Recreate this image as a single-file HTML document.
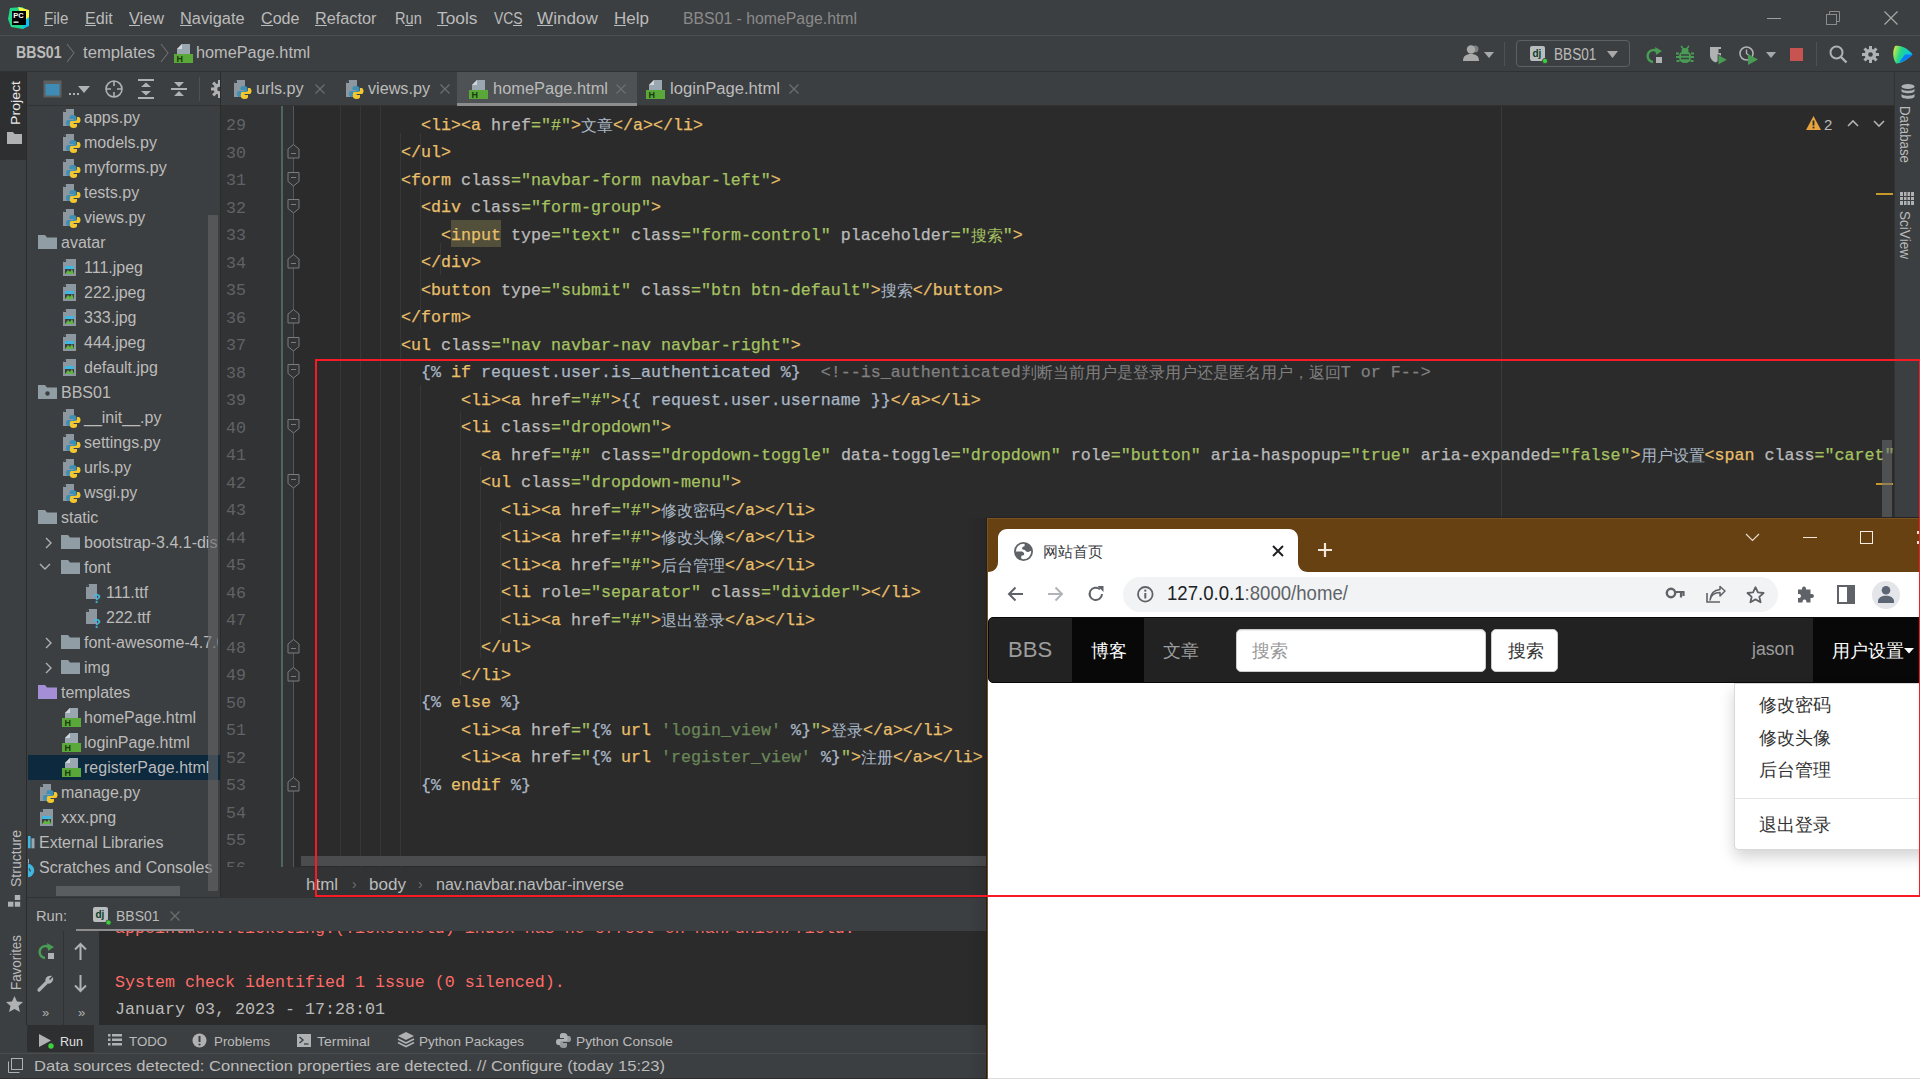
<!DOCTYPE html><html><head><meta charset="utf-8"><style>
*{margin:0;padding:0;box-sizing:border-box}
html,body{width:1920px;height:1079px;overflow:hidden;background:#3c3f41;font-family:"Liberation Sans",sans-serif;position:relative}
.a{position:absolute}
.tx{position:absolute;white-space:pre;line-height:1}
.mono{position:absolute;font-family:"Liberation Mono",monospace;font-size:16.67px;white-space:pre;line-height:27.5px;-webkit-text-stroke:0.25px currentColor}
.t{color:#e8bf6a}.n{color:#bababa}.v{color:#a5c261}.x{color:#a9b7c6}.c{color:#808080}.s{color:#6a8759}
.cj{font-size:16px;font-family:"Liberation Sans",sans-serif;-webkit-text-stroke:0}
.ln{position:absolute;color:#606366;font-family:"Liberation Mono",monospace;font-size:16.67px;text-align:right;width:40px;line-height:27.5px}
svg{position:absolute;overflow:visible}
u{text-decoration:none;border-bottom:1px solid currentColor;display:inline-block;line-height:1.1}
.hl{color:#e8bf6a}</style></head><body>
<div class="a" style="left:0px;top:0px;width:1920px;height:35px;background:#3c3f41"></div>
<div class="a" style="left:0px;top:35px;width:1920px;height:1px;background:#4d4e50"></div>
<div class="a" style="left:0px;top:36px;width:1920px;height:35px;background:#3c3f41"></div>
<div class="a" style="left:0px;top:71px;width:1920px;height:1px;background:#2f3133"></div>
<svg style="left:8px;top:7px;" width="22" height="22" viewBox="0 0 22 22"><polygon points="2,1 14,0 21,5 21,18 15,22 3,20 0,12" fill="#21d789"/><polygon points="10,0 21,3 21,14 14,10" fill="#fcf84a"/><polygon points="21,10 21,19 14,22 16,14" fill="#07c3f2"/><rect x="4" y="4" width="14" height="14" fill="#000"/><text x="5.2" y="11" font-size="7.5" font-weight="bold" fill="#fff" font-family="Liberation Sans">PC</text><rect x="5.5" y="14.5" width="5" height="1.3" fill="#fff"/></svg>
<div class="tx" style="left:44.3px;top:10.9px;font-size:16.00px;color:#bbbbbb;transform-origin:0 0;transform:scaleX(0.9464);">File</div>
<div class="a" style="left:44px;top:25px;width:9px;height:1px;background:#bbbbbb"></div>
<div class="tx" style="left:85.3px;top:10.9px;font-size:16.00px;color:#bbbbbb;transform-origin:0 0;transform:scaleX(1.0047);">Edit</div>
<div class="a" style="left:85px;top:25px;width:11px;height:1px;background:#bbbbbb"></div>
<div class="tx" style="left:128.9px;top:10.9px;font-size:16.00px;color:#bbbbbb;transform-origin:0 0;transform:scaleX(1.0206);">View</div>
<div class="a" style="left:129px;top:25px;width:11px;height:1px;background:#bbbbbb"></div>
<div class="tx" style="left:180.0px;top:10.9px;font-size:16.00px;color:#bbbbbb;transform-origin:0 0;transform:scaleX(1.0230);">Navigate</div>
<div class="a" style="left:180px;top:25px;width:12px;height:1px;background:#bbbbbb"></div>
<div class="tx" style="left:261.0px;top:10.9px;font-size:16.00px;color:#bbbbbb;transform-origin:0 0;transform:scaleX(1.0065);">Code</div>
<div class="a" style="left:261px;top:25px;width:12px;height:1px;background:#bbbbbb"></div>
<div class="tx" style="left:315.4px;top:10.9px;font-size:16.00px;color:#bbbbbb;transform-origin:0 0;transform:scaleX(1.0170);">Refactor</div>
<div class="a" style="left:315px;top:25px;width:12px;height:1px;background:#bbbbbb"></div>
<div class="tx" style="left:394.7px;top:10.9px;font-size:16.00px;color:#bbbbbb;transform-origin:0 0;transform:scaleX(0.9130);">Run</div>
<div class="a" style="left:405px;top:25px;width:8px;height:1px;background:#bbbbbb"></div>
<div class="tx" style="left:437.3px;top:10.9px;font-size:16.00px;color:#bbbbbb;transform-origin:0 0;transform:scaleX(1.0842);">Tools</div>
<div class="a" style="left:437px;top:25px;width:11px;height:1px;background:#bbbbbb"></div>
<div class="tx" style="left:494.0px;top:10.9px;font-size:16.00px;color:#bbbbbb;transform-origin:0 0;transform:scaleX(0.8693);">VCS</div>
<div class="a" style="left:513px;top:25px;width:9px;height:1px;background:#bbbbbb"></div>
<div class="tx" style="left:537.2px;top:10.9px;font-size:16.00px;color:#bbbbbb;transform-origin:0 0;transform:scaleX(1.0684);">Window</div>
<div class="a" style="left:537px;top:25px;width:16px;height:1px;background:#bbbbbb"></div>
<div class="tx" style="left:614.0px;top:10.9px;font-size:16.00px;color:#bbbbbb;transform-origin:0 0;transform:scaleX(1.0575);">Help</div>
<div class="a" style="left:614px;top:25px;width:12px;height:1px;background:#bbbbbb"></div>
<div class="tx" style="left:683.0px;top:10.9px;font-size:16.00px;color:#8b8b8b;transform-origin:0 0;transform:scaleX(0.9881);">BBS01 - homePage.html</div>
<div class="a" style="left:1767px;top:18px;width:14px;height:1px;background:#a0a0a0"></div>
<svg style="left:1826px;top:11px;" width="14" height="14" viewBox="0 0 14 14"><rect x="0.5" y="3.5" width="10" height="10" fill="none" stroke="#8c8c8c"/><path d="M3.5 3.5V0.5h10v10h-3" fill="none" stroke="#8c8c8c"/></svg>
<svg style="left:1884px;top:11px;" width="14" height="14" viewBox="0 0 14 14"><path d="M0.5 0.5L13.5 13.5M13.5 0.5L0.5 13.5" stroke="#a8a8a8" stroke-width="1.2"/></svg>
<div class="tx" style="left:15.5px;top:45.4px;font-size:16.00px;color:#bbbbbb;font-weight:bold;transform-origin:0 0;transform:scaleX(0.8821);">BBS01</div>
<svg style="left:66px;top:43px;" width="10" height="20" viewBox="0 0 10 20"><path d="M1 1L8 10L1 19" fill="none" stroke="#6e6e6e" stroke-width="1.1"/></svg>
<div class="tx" style="left:83.3px;top:45.4px;font-size:16.00px;color:#bbbbbb;transform-origin:0 0;transform:scaleX(1.0408);">templates</div>
<svg style="left:160px;top:43px;" width="10" height="20" viewBox="0 0 10 20"><path d="M1 1L8 10L1 19" fill="none" stroke="#6e6e6e" stroke-width="1.1"/></svg>
<svg style="left:174px;top:44px;" width="19" height="19" viewBox="0 0 19 19"><path d="M8 0H16V10H3V5Z" fill="#9aa7b0"/><path d="M3 5L8 0V5Z" fill="#d0d6da"/><rect x="0" y="10" width="19" height="9" fill="#59a839"/><text x="2.5" y="18" font-size="9" font-weight="bold" font-family="Liberation Sans" fill="#1b3a0e">H</text></svg>
<div class="tx" style="left:196.4px;top:45.4px;font-size:16.00px;color:#bbbbbb;transform-origin:0 0;transform:scaleX(1.0182);">homePage.html</div>
<svg style="left:1462px;top:45px;" width="20" height="17" viewBox="0 0 20 17"><circle cx="9" cy="4.5" r="4.2" fill="#a9a9a9"/><path d="M1 16c0-5 3-7 8-7s8 2 8 7z" fill="#a9a9a9"/><circle cx="13" cy="4" r="3.5" fill="#a9a9a9" opacity=".6"/></svg>
<svg style="left:1484px;top:52px;" width="10" height="6" viewBox="0 0 10 6"><path d="M0 0H10L5 6Z" fill="#a9a9a9"/></svg>
<div class="a" style="left:1504px;top:42px;width:1px;height:24px;background:#515151"></div>
<div class="a" style="left:1516px;top:40px;width:114px;height:27px;border:1px solid #5e6161;border-radius:4px"></div>
<svg style="left:1530px;top:46px;" width="17" height="17" viewBox="0 0 17 17"><rect x="0" y="0" width="15" height="15" rx="2" fill="#b9bdbf"/><text x="2.5" y="11" font-size="10" font-weight="bold" font-family="Liberation Sans" fill="#0c3c26">dj</text><circle cx="15" cy="15" r="2.6" fill="#3bd13b" stroke="#3c3f41" stroke-width="0.8"/></svg>
<div class="tx" style="left:1553.7px;top:46.5px;font-size:16.00px;color:#bbbbbb;transform-origin:0 0;transform:scaleX(0.8492);">BBS01</div>
<svg style="left:1607px;top:51px;" width="11" height="7" viewBox="0 0 11 7"><path d="M0 0H11L5.5 7Z" fill="#a9a9a9"/></svg>
<svg style="left:1645px;top:46px;" width="18" height="18" viewBox="0 0 18 18"><path d="M13 6A6 6 0 1 0 8 16" fill="none" stroke="#499c54" stroke-width="2.4"/><path d="M10 1L17 5L11 9Z" fill="#499c54"/><rect x="11" y="11" width="6" height="6" fill="#afb1b3"/></svg>
<svg style="left:1676px;top:45px;" width="18" height="19" viewBox="0 0 18 19"><path d="M5 1L7.5 4M13 1L10.5 4" stroke="#499c54" stroke-width="1.6"/><ellipse cx="9" cy="5.5" rx="3.5" ry="2.5" fill="#499c54"/><rect x="3" y="6" width="12" height="12" rx="5.5" fill="#499c54"/><path d="M0 8.5H3M15 8.5H18M0 12H3M15 12H18M0.5 16H3.5M14.5 16H17.5" stroke="#499c54" stroke-width="1.8"/><path d="M5 10H13M5 13.5H13" stroke="#3c3f41" stroke-width="1.5"/></svg>
<svg style="left:1709px;top:46px;" width="19" height="19" viewBox="0 0 19 19"><path d="M1 1H12V9C12 13 9 15.5 6.5 16.5C4 15.5 1 13 1 9Z" fill="#afb1b3"/><path d="M9.5 3H12V7H9.5Z" fill="#3c3f41"/><path d="M9 8.5L18.5 13.8L9 19Z" fill="#499c54" stroke="#3c3f41" stroke-width="0.8"/></svg>
<svg style="left:1739px;top:46px;" width="19" height="19" viewBox="0 0 19 19"><circle cx="7.5" cy="7.5" r="6.5" fill="none" stroke="#afb1b3" stroke-width="1.6"/><path d="M7.5 3.5V7.5L10 9.5" stroke="#afb1b3" stroke-width="1.4" fill="none"/><path d="M9 8L19 13.5L9 19Z" fill="#499c54"/></svg>
<svg style="left:1766px;top:52px;" width="10" height="6" viewBox="0 0 10 6"><path d="M0 0H10L5 6Z" fill="#a9a9a9"/></svg>
<div class="a" style="left:1790px;top:48px;width:13px;height:13px;background:#c75450"></div>
<div class="a" style="left:1816px;top:42px;width:1px;height:24px;background:#515151"></div>
<svg style="left:1829px;top:45px;" width="19" height="19" viewBox="0 0 19 19"><circle cx="7.5" cy="7.5" r="6" fill="none" stroke="#afb1b3" stroke-width="2"/><path d="M12 12L17.5 17.5" stroke="#afb1b3" stroke-width="2.4"/></svg>
<svg style="left:1862px;top:46px;" width="17" height="17" viewBox="0 0 17 17"><circle cx="8.5" cy="8.5" r="5.8" fill="#afb1b3"/><rect x="7" y="0" width="3" height="4" fill="#afb1b3" transform="rotate(0 8.5 8.5)"/><rect x="7" y="0" width="3" height="4" fill="#afb1b3" transform="rotate(45 8.5 8.5)"/><rect x="7" y="0" width="3" height="4" fill="#afb1b3" transform="rotate(90 8.5 8.5)"/><rect x="7" y="0" width="3" height="4" fill="#afb1b3" transform="rotate(135 8.5 8.5)"/><rect x="7" y="0" width="3" height="4" fill="#afb1b3" transform="rotate(180 8.5 8.5)"/><rect x="7" y="0" width="3" height="4" fill="#afb1b3" transform="rotate(225 8.5 8.5)"/><rect x="7" y="0" width="3" height="4" fill="#afb1b3" transform="rotate(270 8.5 8.5)"/><rect x="7" y="0" width="3" height="4" fill="#afb1b3" transform="rotate(315 8.5 8.5)"/><circle cx="8.5" cy="8.5" r="2.3" fill="#3c3f41"/></svg>
<svg style="left:1893px;top:45px;" width="20" height="19" viewBox="0 0 20 19"><defs><linearGradient id="lg1" x1="0" y1="0" x2="1" y2="0.3"><stop offset="0" stop-color="#f3eb3c"/><stop offset=".45" stop-color="#21d789"/><stop offset="1" stop-color="#07c3f2"/></linearGradient></defs><path d="M2 1C9 0 15 4 19.5 9.5C15 14 9 18.5 3 18.5C-0.5 13 -0.5 6 2 1Z" fill="url(#lg1)"/><path d="M19.5 9.5L12 9.5L6 17.5C11 16.5 16 13 19.5 9.5Z" fill="#087cfa"/></svg>
<div class="a" style="left:0px;top:72px;width:27px;height:980px;background:#3c3f41"></div>
<div class="a" style="left:0px;top:72px;width:27px;height:88px;background:#2d2f30"></div>
<div class="a" style="left:26px;top:72px;width:1px;height:980px;background:#2b2b2b"></div>
<div class="tx" style="left:0.0px;top:-11.4px;font-size:13.50px;color:#e8e8e8;transform-origin:0 0;transform:translate(9px,125px) rotate(-90deg) scaleX(1.0472) translate(0,-0px);left:0;top:0">Project</div>
<svg style="left:7px;top:132px;" width="15" height="12" viewBox="0 0 15 12"><path d="M0 0H6L7.5 2H15V12H0Z" fill="#afb1b3"/></svg>
<div class="tx" style="left:0.0px;top:-11.9px;font-size:14.00px;color:#bbbbbb;transform-origin:0 0;transform:translate(9px,887px) rotate(-90deg) scaleX(1.0035);left:0;top:0">Structure</div>
<svg style="left:8px;top:895px;" width="13" height="12" viewBox="0 0 13 12"><rect x="0" y="6.7" width="5.4" height="5" fill="#afb1b3"/><rect x="6.8" y="6.7" width="5.4" height="5" fill="#afb1b3"/><rect x="6.8" y="0" width="5.4" height="5" fill="#afb1b3"/></svg>
<div class="tx" style="left:0.0px;top:-11.9px;font-size:14.00px;color:#bbbbbb;transform-origin:0 0;transform:translate(9px,990px) rotate(-90deg) scaleX(0.9553);left:0;top:0">Favorites</div>
<svg style="left:6px;top:996px;" width="17" height="16" viewBox="0 0 17 16"><path d="M8.5 0L11 5.5L17 6L12.5 10L14 16L8.5 13L3 16L4.5 10L0 6L6 5.5Z" fill="#afb1b3"/></svg>
<div class="a" style="left:28px;top:72px;width:192px;height:825px;background:#3c3f41"></div>
<div class="a" style="left:28px;top:105px;width:192px;height:1px;background:#323232"></div>
<div class="a" style="left:220px;top:72px;width:1px;height:825px;background:#2b2b2b"></div>
<svg style="left:43px;top:80px;" width="20" height="19" viewBox="0 0 20 19"><rect x="0.5" y="0.5" width="18" height="17" fill="#5e6060" /><rect x="2.5" y="4" width="14" height="11.5" fill="#3e8bb5"/></svg>
<div class="a" style="left:69px;top:93px;width:2px;height:2px;background:#afb1b3"></div>
<div class="a" style="left:73px;top:93px;width:2px;height:2px;background:#afb1b3"></div>
<div class="a" style="left:77px;top:93px;width:2px;height:2px;background:#afb1b3"></div>
<svg style="left:78px;top:86px;" width="12" height="8" viewBox="0 0 12 8"><path d="M0 0H12L6 7Z" fill="#afb1b3"/></svg>
<svg style="left:105px;top:80px;" width="18" height="18" viewBox="0 0 18 18"><circle cx="9" cy="9" r="8" fill="none" stroke="#afb1b3" stroke-width="1.6"/><path d="M9 1V6M9 12V17M1 9H6M12 9H17" stroke="#afb1b3" stroke-width="1.6"/></svg>
<svg style="left:138px;top:79px;" width="16" height="20" viewBox="0 0 16 20"><path d="M0 1H16M0 19H16" stroke="#afb1b3" stroke-width="2"/><path d="M8 3.5L13 8H3Z M8 16.5L13 12H3Z" fill="#afb1b3"/></svg>
<svg style="left:171px;top:80px;" width="16" height="18" viewBox="0 0 16 18"><path d="M0 9H16" stroke="#afb1b3" stroke-width="2"/><path d="M8 7L13 2H3Z M8 11L13 16H3Z" fill="#afb1b3"/></svg>
<div class="a" style="left:199px;top:77px;width:1px;height:24px;background:#515151"></div>
<svg style="left:211px;top:80px;overflow:hidden" width="9" height="18" viewBox="0 0 9 18"><circle cx="8.5" cy="9" r="5.8" fill="#afb1b3"/><rect x="7" y="0" width="3" height="4" fill="#afb1b3" transform="rotate(0 8.5 9)"/><rect x="7" y="0" width="3" height="4" fill="#afb1b3" transform="rotate(45 8.5 9)"/><rect x="7" y="0" width="3" height="4" fill="#afb1b3" transform="rotate(90 8.5 9)"/><rect x="7" y="0" width="3" height="4" fill="#afb1b3" transform="rotate(135 8.5 9)"/><rect x="7" y="0" width="3" height="4" fill="#afb1b3" transform="rotate(180 8.5 9)"/><rect x="7" y="0" width="3" height="4" fill="#afb1b3" transform="rotate(225 8.5 9)"/><rect x="7" y="0" width="3" height="4" fill="#afb1b3" transform="rotate(270 8.5 9)"/><rect x="7" y="0" width="3" height="4" fill="#afb1b3" transform="rotate(315 8.5 9)"/><circle cx="8.5" cy="9" r="2.3" fill="#3c3f41"/></svg>
<div class="a" style="left:28px;top:755px;width:192px;height:25px;background:#0d293e"></div>
<div class="a" style="left:28px;top:105px;width:190px;height:781px;overflow:hidden">
<svg style="left:35px;top:4px;" width="18" height="19" viewBox="0 0 18 19"><path d="M3 0H11V17H0V3Z" fill="#9aa7b0" opacity=".85"/><path d="M3 0V3H0Z" fill="#3c3f41"/><path d="M10 6C7 6 6.5 7 6.5 8.5V10H10.5V11H5C3.5 11 3 12.5 3 14C3 15.5 3.7 17 5 17H6.5V15C6.5 13.8 7.3 13 8.5 13H12C13 13 13.5 12.5 13.5 11.5V8.5C13.5 7 12.5 6 10 6Z" fill="#3d8fb5"/><path d="M10.5 19C13.5 19 14 18 14 16.5V15H10V14H15.5C17 14 17.5 12.5 17.5 11C17.5 9.5 16.8 8 15.5 8H14V10C14 11.2 13.2 12 12 12H8.5C7.5 12 7 12.5 7 13.5V16.5C7 18 8 19 10.5 19Z" fill="#f4c82d"/></svg>
<div class="tx" style="left:56.0px;top:4.5px;font-size:16.00px;color:#bbbbbb;">apps.py</div>
<svg style="left:35px;top:29px;" width="18" height="19" viewBox="0 0 18 19"><path d="M3 0H11V17H0V3Z" fill="#9aa7b0" opacity=".85"/><path d="M3 0V3H0Z" fill="#3c3f41"/><path d="M10 6C7 6 6.5 7 6.5 8.5V10H10.5V11H5C3.5 11 3 12.5 3 14C3 15.5 3.7 17 5 17H6.5V15C6.5 13.8 7.3 13 8.5 13H12C13 13 13.5 12.5 13.5 11.5V8.5C13.5 7 12.5 6 10 6Z" fill="#3d8fb5"/><path d="M10.5 19C13.5 19 14 18 14 16.5V15H10V14H15.5C17 14 17.5 12.5 17.5 11C17.5 9.5 16.8 8 15.5 8H14V10C14 11.2 13.2 12 12 12H8.5C7.5 12 7 12.5 7 13.5V16.5C7 18 8 19 10.5 19Z" fill="#f4c82d"/></svg>
<div class="tx" style="left:56.0px;top:29.5px;font-size:16.00px;color:#bbbbbb;">models.py</div>
<svg style="left:35px;top:54px;" width="18" height="19" viewBox="0 0 18 19"><path d="M3 0H11V17H0V3Z" fill="#9aa7b0" opacity=".85"/><path d="M3 0V3H0Z" fill="#3c3f41"/><path d="M10 6C7 6 6.5 7 6.5 8.5V10H10.5V11H5C3.5 11 3 12.5 3 14C3 15.5 3.7 17 5 17H6.5V15C6.5 13.8 7.3 13 8.5 13H12C13 13 13.5 12.5 13.5 11.5V8.5C13.5 7 12.5 6 10 6Z" fill="#3d8fb5"/><path d="M10.5 19C13.5 19 14 18 14 16.5V15H10V14H15.5C17 14 17.5 12.5 17.5 11C17.5 9.5 16.8 8 15.5 8H14V10C14 11.2 13.2 12 12 12H8.5C7.5 12 7 12.5 7 13.5V16.5C7 18 8 19 10.5 19Z" fill="#f4c82d"/></svg>
<div class="tx" style="left:56.0px;top:54.5px;font-size:16.00px;color:#bbbbbb;">myforms.py</div>
<svg style="left:35px;top:79px;" width="18" height="19" viewBox="0 0 18 19"><path d="M3 0H11V17H0V3Z" fill="#9aa7b0" opacity=".85"/><path d="M3 0V3H0Z" fill="#3c3f41"/><path d="M10 6C7 6 6.5 7 6.5 8.5V10H10.5V11H5C3.5 11 3 12.5 3 14C3 15.5 3.7 17 5 17H6.5V15C6.5 13.8 7.3 13 8.5 13H12C13 13 13.5 12.5 13.5 11.5V8.5C13.5 7 12.5 6 10 6Z" fill="#3d8fb5"/><path d="M10.5 19C13.5 19 14 18 14 16.5V15H10V14H15.5C17 14 17.5 12.5 17.5 11C17.5 9.5 16.8 8 15.5 8H14V10C14 11.2 13.2 12 12 12H8.5C7.5 12 7 12.5 7 13.5V16.5C7 18 8 19 10.5 19Z" fill="#f4c82d"/></svg>
<div class="tx" style="left:56.0px;top:79.5px;font-size:16.00px;color:#bbbbbb;">tests.py</div>
<svg style="left:35px;top:104px;" width="18" height="19" viewBox="0 0 18 19"><path d="M3 0H11V17H0V3Z" fill="#9aa7b0" opacity=".85"/><path d="M3 0V3H0Z" fill="#3c3f41"/><path d="M10 6C7 6 6.5 7 6.5 8.5V10H10.5V11H5C3.5 11 3 12.5 3 14C3 15.5 3.7 17 5 17H6.5V15C6.5 13.8 7.3 13 8.5 13H12C13 13 13.5 12.5 13.5 11.5V8.5C13.5 7 12.5 6 10 6Z" fill="#3d8fb5"/><path d="M10.5 19C13.5 19 14 18 14 16.5V15H10V14H15.5C17 14 17.5 12.5 17.5 11C17.5 9.5 16.8 8 15.5 8H14V10C14 11.2 13.2 12 12 12H8.5C7.5 12 7 12.5 7 13.5V16.5C7 18 8 19 10.5 19Z" fill="#f4c82d"/></svg>
<div class="tx" style="left:56.0px;top:104.5px;font-size:16.00px;color:#bbbbbb;">views.py</div>
<svg style="left:10px;top:130px;" width="19" height="14" viewBox="0 0 19 14"><path d="M0 0H7L9 2.5H19V14H0Z" fill="#9aa7b0" opacity=".9"/></svg>
<div class="tx" style="left:33.0px;top:129.5px;font-size:16.00px;color:#bbbbbb;">avatar</div>
<svg style="left:35px;top:154px;" width="18" height="19" viewBox="0 0 18 19"><path d="M3 0H13V17H0V3Z" fill="#9aa7b0" opacity=".85"/><path d="M3 0V3H0Z" fill="#3c3f41"/><rect x="2" y="7" width="9" height="8" fill="#3c3f41"/><path d="M2 15L5 11L7 13L9 10L11 15Z" fill="#62b543"/><rect x="2" y="7" width="9" height="3" fill="#40b6e0"/></svg>
<div class="tx" style="left:56.0px;top:154.5px;font-size:16.00px;color:#bbbbbb;">111.jpeg</div>
<svg style="left:35px;top:179px;" width="18" height="19" viewBox="0 0 18 19"><path d="M3 0H13V17H0V3Z" fill="#9aa7b0" opacity=".85"/><path d="M3 0V3H0Z" fill="#3c3f41"/><rect x="2" y="7" width="9" height="8" fill="#3c3f41"/><path d="M2 15L5 11L7 13L9 10L11 15Z" fill="#62b543"/><rect x="2" y="7" width="9" height="3" fill="#40b6e0"/></svg>
<div class="tx" style="left:56.0px;top:179.5px;font-size:16.00px;color:#bbbbbb;">222.jpeg</div>
<svg style="left:35px;top:204px;" width="18" height="19" viewBox="0 0 18 19"><path d="M3 0H13V17H0V3Z" fill="#9aa7b0" opacity=".85"/><path d="M3 0V3H0Z" fill="#3c3f41"/><rect x="2" y="7" width="9" height="8" fill="#3c3f41"/><path d="M2 15L5 11L7 13L9 10L11 15Z" fill="#62b543"/><rect x="2" y="7" width="9" height="3" fill="#40b6e0"/></svg>
<div class="tx" style="left:56.0px;top:204.5px;font-size:16.00px;color:#bbbbbb;">333.jpg</div>
<svg style="left:35px;top:229px;" width="18" height="19" viewBox="0 0 18 19"><path d="M3 0H13V17H0V3Z" fill="#9aa7b0" opacity=".85"/><path d="M3 0V3H0Z" fill="#3c3f41"/><rect x="2" y="7" width="9" height="8" fill="#3c3f41"/><path d="M2 15L5 11L7 13L9 10L11 15Z" fill="#62b543"/><rect x="2" y="7" width="9" height="3" fill="#40b6e0"/></svg>
<div class="tx" style="left:56.0px;top:229.5px;font-size:16.00px;color:#bbbbbb;">444.jpeg</div>
<svg style="left:35px;top:254px;" width="18" height="19" viewBox="0 0 18 19"><path d="M3 0H13V17H0V3Z" fill="#9aa7b0" opacity=".85"/><path d="M3 0V3H0Z" fill="#3c3f41"/><rect x="2" y="7" width="9" height="8" fill="#3c3f41"/><path d="M2 15L5 11L7 13L9 10L11 15Z" fill="#62b543"/><rect x="2" y="7" width="9" height="3" fill="#40b6e0"/></svg>
<div class="tx" style="left:56.0px;top:254.5px;font-size:16.00px;color:#bbbbbb;">default.jpg</div>
<svg style="left:10px;top:280px;" width="19" height="14" viewBox="0 0 19 14"><path d="M0 0H7L9 2.5H19V14H0Z" fill="#9aa7b0" opacity=".9"/><circle cx="9.5" cy="8.5" r="2.2" fill="#3c3f41"/></svg>
<div class="tx" style="left:33.0px;top:279.5px;font-size:16.00px;color:#bbbbbb;">BBS01</div>
<svg style="left:35px;top:304px;" width="18" height="19" viewBox="0 0 18 19"><path d="M3 0H11V17H0V3Z" fill="#9aa7b0" opacity=".85"/><path d="M3 0V3H0Z" fill="#3c3f41"/><path d="M10 6C7 6 6.5 7 6.5 8.5V10H10.5V11H5C3.5 11 3 12.5 3 14C3 15.5 3.7 17 5 17H6.5V15C6.5 13.8 7.3 13 8.5 13H12C13 13 13.5 12.5 13.5 11.5V8.5C13.5 7 12.5 6 10 6Z" fill="#3d8fb5"/><path d="M10.5 19C13.5 19 14 18 14 16.5V15H10V14H15.5C17 14 17.5 12.5 17.5 11C17.5 9.5 16.8 8 15.5 8H14V10C14 11.2 13.2 12 12 12H8.5C7.5 12 7 12.5 7 13.5V16.5C7 18 8 19 10.5 19Z" fill="#f4c82d"/></svg>
<div class="tx" style="left:56.0px;top:304.5px;font-size:16.00px;color:#bbbbbb;">__init__.py</div>
<svg style="left:35px;top:329px;" width="18" height="19" viewBox="0 0 18 19"><path d="M3 0H11V17H0V3Z" fill="#9aa7b0" opacity=".85"/><path d="M3 0V3H0Z" fill="#3c3f41"/><path d="M10 6C7 6 6.5 7 6.5 8.5V10H10.5V11H5C3.5 11 3 12.5 3 14C3 15.5 3.7 17 5 17H6.5V15C6.5 13.8 7.3 13 8.5 13H12C13 13 13.5 12.5 13.5 11.5V8.5C13.5 7 12.5 6 10 6Z" fill="#3d8fb5"/><path d="M10.5 19C13.5 19 14 18 14 16.5V15H10V14H15.5C17 14 17.5 12.5 17.5 11C17.5 9.5 16.8 8 15.5 8H14V10C14 11.2 13.2 12 12 12H8.5C7.5 12 7 12.5 7 13.5V16.5C7 18 8 19 10.5 19Z" fill="#f4c82d"/></svg>
<div class="tx" style="left:56.0px;top:329.5px;font-size:16.00px;color:#bbbbbb;">settings.py</div>
<svg style="left:35px;top:354px;" width="18" height="19" viewBox="0 0 18 19"><path d="M3 0H11V17H0V3Z" fill="#9aa7b0" opacity=".85"/><path d="M3 0V3H0Z" fill="#3c3f41"/><path d="M10 6C7 6 6.5 7 6.5 8.5V10H10.5V11H5C3.5 11 3 12.5 3 14C3 15.5 3.7 17 5 17H6.5V15C6.5 13.8 7.3 13 8.5 13H12C13 13 13.5 12.5 13.5 11.5V8.5C13.5 7 12.5 6 10 6Z" fill="#3d8fb5"/><path d="M10.5 19C13.5 19 14 18 14 16.5V15H10V14H15.5C17 14 17.5 12.5 17.5 11C17.5 9.5 16.8 8 15.5 8H14V10C14 11.2 13.2 12 12 12H8.5C7.5 12 7 12.5 7 13.5V16.5C7 18 8 19 10.5 19Z" fill="#f4c82d"/></svg>
<div class="tx" style="left:56.0px;top:354.5px;font-size:16.00px;color:#bbbbbb;">urls.py</div>
<svg style="left:35px;top:379px;" width="18" height="19" viewBox="0 0 18 19"><path d="M3 0H11V17H0V3Z" fill="#9aa7b0" opacity=".85"/><path d="M3 0V3H0Z" fill="#3c3f41"/><path d="M10 6C7 6 6.5 7 6.5 8.5V10H10.5V11H5C3.5 11 3 12.5 3 14C3 15.5 3.7 17 5 17H6.5V15C6.5 13.8 7.3 13 8.5 13H12C13 13 13.5 12.5 13.5 11.5V8.5C13.5 7 12.5 6 10 6Z" fill="#3d8fb5"/><path d="M10.5 19C13.5 19 14 18 14 16.5V15H10V14H15.5C17 14 17.5 12.5 17.5 11C17.5 9.5 16.8 8 15.5 8H14V10C14 11.2 13.2 12 12 12H8.5C7.5 12 7 12.5 7 13.5V16.5C7 18 8 19 10.5 19Z" fill="#f4c82d"/></svg>
<div class="tx" style="left:56.0px;top:379.5px;font-size:16.00px;color:#bbbbbb;">wsgi.py</div>
<svg style="left:10px;top:405px;" width="19" height="14" viewBox="0 0 19 14"><path d="M0 0H7L9 2.5H19V14H0Z" fill="#9aa7b0" opacity=".9"/></svg>
<div class="tx" style="left:33.0px;top:404.5px;font-size:16.00px;color:#bbbbbb;">static</div>
<svg style="left:33px;top:430px;" width="19" height="14" viewBox="0 0 19 14"><path d="M0 0H7L9 2.5H19V14H0Z" fill="#9aa7b0" opacity=".9"/></svg>
<svg style="left:16px;top:432px;" width="12" height="12" viewBox="0 0 12 12"><path d="M2 1L7 6L2 11" fill="none" stroke="#afb1b3" stroke-width="1.4"/></svg>
<div class="tx" style="left:56.0px;top:429.5px;font-size:16.00px;color:#bbbbbb;">bootstrap-3.4.1-dist</div>
<svg style="left:33px;top:455px;" width="19" height="14" viewBox="0 0 19 14"><path d="M0 0H7L9 2.5H19V14H0Z" fill="#9aa7b0" opacity=".9"/></svg>
<svg style="left:11px;top:457px;" width="12" height="12" viewBox="0 0 12 12"><path d="M1 2L6 7L11 2" fill="none" stroke="#afb1b3" stroke-width="1.4"/></svg>
<div class="tx" style="left:56.0px;top:454.5px;font-size:16.00px;color:#bbbbbb;">font</div>
<svg style="left:58px;top:479px;" width="15" height="19" viewBox="0 0 15 19"><path d="M3 0H11V15H0V3Z" fill="#9aa7b0" opacity=".85"/><path d="M3 0V3H0Z" fill="#3c3f41"/><text x="7" y="19" font-size="13" font-weight="bold" font-family="Liberation Sans" fill="#40b6e0">?</text></svg>
<div class="tx" style="left:78.0px;top:479.5px;font-size:16.00px;color:#bbbbbb;">111.ttf</div>
<svg style="left:58px;top:504px;" width="15" height="19" viewBox="0 0 15 19"><path d="M3 0H11V15H0V3Z" fill="#9aa7b0" opacity=".85"/><path d="M3 0V3H0Z" fill="#3c3f41"/><text x="7" y="19" font-size="13" font-weight="bold" font-family="Liberation Sans" fill="#40b6e0">?</text></svg>
<div class="tx" style="left:78.0px;top:504.5px;font-size:16.00px;color:#bbbbbb;">222.ttf</div>
<svg style="left:33px;top:530px;" width="19" height="14" viewBox="0 0 19 14"><path d="M0 0H7L9 2.5H19V14H0Z" fill="#9aa7b0" opacity=".9"/></svg>
<svg style="left:16px;top:532px;" width="12" height="12" viewBox="0 0 12 12"><path d="M2 1L7 6L2 11" fill="none" stroke="#afb1b3" stroke-width="1.4"/></svg>
<div class="tx" style="left:56.0px;top:529.5px;font-size:16.00px;color:#bbbbbb;">font-awesome-4.7.0</div>
<svg style="left:33px;top:555px;" width="19" height="14" viewBox="0 0 19 14"><path d="M0 0H7L9 2.5H19V14H0Z" fill="#9aa7b0" opacity=".9"/></svg>
<svg style="left:16px;top:557px;" width="12" height="12" viewBox="0 0 12 12"><path d="M2 1L7 6L2 11" fill="none" stroke="#afb1b3" stroke-width="1.4"/></svg>
<div class="tx" style="left:56.0px;top:554.5px;font-size:16.00px;color:#bbbbbb;">img</div>
<svg style="left:10px;top:580px;" width="19" height="14" viewBox="0 0 19 14"><path d="M0 0H7L9 2.5H19V14H0Z" fill="#a48fd6"/></svg>
<div class="tx" style="left:33.0px;top:579.5px;font-size:16.00px;color:#bbbbbb;">templates</div>
<svg style="left:34px;top:603px;" width="19" height="19" viewBox="0 0 19 19"><path d="M8 0H16V10H3V5Z" fill="#9aa7b0"/><path d="M3 5L8 0V5Z" fill="#d0d6da"/><rect x="0" y="10" width="19" height="9" fill="#59a839"/><text x="2.5" y="18" font-size="9" font-weight="bold" font-family="Liberation Sans" fill="#1b3a0e">H</text></svg>
<div class="tx" style="left:56.0px;top:604.5px;font-size:16.00px;color:#bbbbbb;">homePage.html</div>
<svg style="left:34px;top:628px;" width="19" height="19" viewBox="0 0 19 19"><path d="M8 0H16V10H3V5Z" fill="#9aa7b0"/><path d="M3 5L8 0V5Z" fill="#d0d6da"/><rect x="0" y="10" width="19" height="9" fill="#59a839"/><text x="2.5" y="18" font-size="9" font-weight="bold" font-family="Liberation Sans" fill="#1b3a0e">H</text></svg>
<div class="tx" style="left:56.0px;top:629.5px;font-size:16.00px;color:#bbbbbb;">loginPage.html</div>
<svg style="left:34px;top:653px;" width="19" height="19" viewBox="0 0 19 19"><path d="M8 0H16V10H3V5Z" fill="#9aa7b0"/><path d="M3 5L8 0V5Z" fill="#d0d6da"/><rect x="0" y="10" width="19" height="9" fill="#59a839"/><text x="2.5" y="18" font-size="9" font-weight="bold" font-family="Liberation Sans" fill="#1b3a0e">H</text></svg>
<div class="tx" style="left:56.0px;top:654.5px;font-size:16.00px;color:#bbbbbb;">registerPage.html</div>
<svg style="left:12px;top:679px;" width="18" height="19" viewBox="0 0 18 19"><path d="M3 0H11V17H0V3Z" fill="#9aa7b0" opacity=".85"/><path d="M3 0V3H0Z" fill="#3c3f41"/><path d="M10 6C7 6 6.5 7 6.5 8.5V10H10.5V11H5C3.5 11 3 12.5 3 14C3 15.5 3.7 17 5 17H6.5V15C6.5 13.8 7.3 13 8.5 13H12C13 13 13.5 12.5 13.5 11.5V8.5C13.5 7 12.5 6 10 6Z" fill="#3d8fb5"/><path d="M10.5 19C13.5 19 14 18 14 16.5V15H10V14H15.5C17 14 17.5 12.5 17.5 11C17.5 9.5 16.8 8 15.5 8H14V10C14 11.2 13.2 12 12 12H8.5C7.5 12 7 12.5 7 13.5V16.5C7 18 8 19 10.5 19Z" fill="#f4c82d"/></svg>
<div class="tx" style="left:33.0px;top:679.5px;font-size:16.00px;color:#bbbbbb;">manage.py</div>
<svg style="left:12px;top:704px;" width="18" height="19" viewBox="0 0 18 19"><path d="M3 0H13V17H0V3Z" fill="#9aa7b0" opacity=".85"/><path d="M3 0V3H0Z" fill="#3c3f41"/><rect x="2" y="7" width="9" height="8" fill="#3c3f41"/><path d="M2 15L5 11L7 13L9 10L11 15Z" fill="#62b543"/><rect x="2" y="7" width="9" height="3" fill="#40b6e0"/></svg>
<div class="tx" style="left:33.0px;top:704.5px;font-size:16.00px;color:#bbbbbb;">xxx.png</div>
<svg style="left:-0.5px;top:731px;" width="8" height="14" viewBox="0 0 8 14"><rect x="0" y="0" width="2.6" height="12.3" fill="#40b6e0"/><rect x="3.5" y="2.3" width="3" height="10" fill="#9aa7b0"/></svg>
<div class="tx" style="left:11.0px;top:729.5px;font-size:16.00px;color:#bbbbbb;">External Libraries</div>
<svg style="left:-1px;top:754px;" width="9" height="19" viewBox="0 0 9 19"><rect x="0" y="0" width="2" height="4.5" fill="#9aa7b0"/><circle cx="0.5" cy="11.5" r="6.7" fill="#40b6e0"/><path d="M2 9.5L3.5 12.5" stroke="#3c3f41" stroke-width="1.1" fill="none"/></svg>
<div class="tx" style="left:11.0px;top:754.5px;font-size:16.00px;color:#bbbbbb;">Scratches and Consoles</div>
</div>
<div class="a" style="left:208px;top:215px;width:10px;height:676px;background:rgba(100,102,104,.6);border-radius:1px"></div>
<div class="a" style="left:56px;top:886px;width:124px;height:10px;background:#5a5d5f"></div>
<div class="a" style="left:221px;top:72px;width:1674px;height:34px;background:#3c3f41"></div>
<div class="a" style="left:221px;top:105px;width:1674px;height:1px;background:#323232"></div>
<div class="a" style="left:457px;top:72px;width:180px;height:34px;background:#4e5254"></div>
<div class="a" style="left:457px;top:103px;width:180px;height:3px;background:#8d8d8d"></div>
<svg style="left:234px;top:80px;" width="18" height="19" viewBox="0 0 18 19"><path d="M3 0H11V17H0V3Z" fill="#9aa7b0" opacity=".85"/><path d="M3 0V3H0Z" fill="#3c3f41"/><path d="M10 6C7 6 6.5 7 6.5 8.5V10H10.5V11H5C3.5 11 3 12.5 3 14C3 15.5 3.7 17 5 17H6.5V15C6.5 13.8 7.3 13 8.5 13H12C13 13 13.5 12.5 13.5 11.5V8.5C13.5 7 12.5 6 10 6Z" fill="#3d8fb5"/><path d="M10.5 19C13.5 19 14 18 14 16.5V15H10V14H15.5C17 14 17.5 12.5 17.5 11C17.5 9.5 16.8 8 15.5 8H14V10C14 11.2 13.2 12 12 12H8.5C7.5 12 7 12.5 7 13.5V16.5C7 18 8 19 10.5 19Z" fill="#f4c82d"/></svg>
<div class="tx" style="left:256.0px;top:81.3px;font-size:16.00px;color:#bbbbbb;transform-origin:0 0;transform:scaleX(1.0122);">urls.py</div>
<svg style="left:314.5px;top:84px;" width="10" height="10" viewBox="0 0 10 10"><path d="M0.5 0.5L9.5 9.5M9.5 0.5L0.5 9.5" stroke="#6e6e6e" stroke-width="1.2"/></svg>
<svg style="left:346px;top:80px;" width="18" height="19" viewBox="0 0 18 19"><path d="M3 0H11V17H0V3Z" fill="#9aa7b0" opacity=".85"/><path d="M3 0V3H0Z" fill="#3c3f41"/><path d="M10 6C7 6 6.5 7 6.5 8.5V10H10.5V11H5C3.5 11 3 12.5 3 14C3 15.5 3.7 17 5 17H6.5V15C6.5 13.8 7.3 13 8.5 13H12C13 13 13.5 12.5 13.5 11.5V8.5C13.5 7 12.5 6 10 6Z" fill="#3d8fb5"/><path d="M10.5 19C13.5 19 14 18 14 16.5V15H10V14H15.5C17 14 17.5 12.5 17.5 11C17.5 9.5 16.8 8 15.5 8H14V10C14 11.2 13.2 12 12 12H8.5C7.5 12 7 12.5 7 13.5V16.5C7 18 8 19 10.5 19Z" fill="#f4c82d"/></svg>
<div class="tx" style="left:368.0px;top:81.3px;font-size:16.00px;color:#bbbbbb;transform-origin:0 0;transform:scaleX(1.0105);">views.py</div>
<svg style="left:439.5px;top:84px;" width="10" height="10" viewBox="0 0 10 10"><path d="M0.5 0.5L9.5 9.5M9.5 0.5L0.5 9.5" stroke="#6e6e6e" stroke-width="1.2"/></svg>
<svg style="left:469px;top:80px;" width="19" height="19" viewBox="0 0 19 19"><path d="M8 0H16V10H3V5Z" fill="#9aa7b0"/><path d="M3 5L8 0V5Z" fill="#d0d6da"/><rect x="0" y="10" width="19" height="9" fill="#59a839"/><text x="2.5" y="18" font-size="9" font-weight="bold" font-family="Liberation Sans" fill="#1b3a0e">H</text></svg>
<div class="tx" style="left:493.0px;top:81.3px;font-size:16.00px;color:#bbbbbb;transform-origin:0 0;transform:scaleX(1.0262);">homePage.html</div>
<svg style="left:616px;top:84px;" width="10" height="10" viewBox="0 0 10 10"><path d="M0.5 0.5L9.5 9.5M9.5 0.5L0.5 9.5" stroke="#6e6e6e" stroke-width="1.2"/></svg>
<svg style="left:646px;top:80px;" width="19" height="19" viewBox="0 0 19 19"><path d="M8 0H16V10H3V5Z" fill="#9aa7b0"/><path d="M3 5L8 0V5Z" fill="#d0d6da"/><rect x="0" y="10" width="19" height="9" fill="#59a839"/><text x="2.5" y="18" font-size="9" font-weight="bold" font-family="Liberation Sans" fill="#1b3a0e">H</text></svg>
<div class="tx" style="left:670.0px;top:81.3px;font-size:16.00px;color:#bbbbbb;transform-origin:0 0;transform:scaleX(1.0392);">loginPage.html</div>
<svg style="left:789px;top:84px;" width="10" height="10" viewBox="0 0 10 10"><path d="M0.5 0.5L9.5 9.5M9.5 0.5L0.5 9.5" stroke="#6e6e6e" stroke-width="1.2"/></svg>
<div class="a" style="left:221px;top:106px;width:73px;height:761px;background:#313335"></div>
<div class="a" style="left:294px;top:106px;width:1601px;height:761px;background:#2b2b2b"></div>
<div class="a" style="left:281px;top:106px;width:2px;height:761px;background:#4b675e"></div>
<div class="a" style="left:293px;top:106px;width:1px;height:761px;background:#555759"></div>
<div class="a" style="left:340px;top:106px;width:1px;height:761px;background:#373737"></div>
<div class="a" style="left:360px;top:106px;width:1px;height:761px;background:#373737"></div>
<div class="a" style="left:380px;top:106px;width:1px;height:761px;background:#373737"></div>
<div class="a" style="left:400px;top:133px;width:1px;height:734px;background:#373737"></div>
<div class="a" style="left:420px;top:133px;width:1px;height:197px;background:#373737"></div>
<div class="a" style="left:440px;top:243px;width:1px;height:32px;background:#373737"></div>
<div class="a" style="left:420px;top:385px;width:1px;height:405px;background:#373737"></div>
<div class="a" style="left:460px;top:412px;width:1px;height:273px;background:#373737"></div>
<div class="a" style="left:480px;top:467px;width:1px;height:191px;background:#373737"></div>
<div class="a" style="left:500px;top:522px;width:1px;height:111px;background:#373737"></div>
<div class="a" style="left:1501px;top:106px;width:1px;height:761px;background:#3a3a3a"></div>
<svg style="left:287px;top:144.25px;" width="13" height="15" viewBox="0 0 13 15"><path d="M6.5 0.5L12 5V14H1V5Z" fill="#313335" stroke="#7a7c7e" stroke-width="1"/><path d="M4 9.5H9" stroke="#7a7c7e"/></svg>
<svg style="left:287px;top:254.25px;" width="13" height="15" viewBox="0 0 13 15"><path d="M6.5 0.5L12 5V14H1V5Z" fill="#313335" stroke="#7a7c7e" stroke-width="1"/><path d="M4 9.5H9" stroke="#7a7c7e"/></svg>
<svg style="left:287px;top:309.25px;" width="13" height="15" viewBox="0 0 13 15"><path d="M6.5 0.5L12 5V14H1V5Z" fill="#313335" stroke="#7a7c7e" stroke-width="1"/><path d="M4 9.5H9" stroke="#7a7c7e"/></svg>
<svg style="left:287px;top:639.25px;" width="13" height="15" viewBox="0 0 13 15"><path d="M6.5 0.5L12 5V14H1V5Z" fill="#313335" stroke="#7a7c7e" stroke-width="1"/><path d="M4 9.5H9" stroke="#7a7c7e"/></svg>
<svg style="left:287px;top:666.75px;" width="13" height="15" viewBox="0 0 13 15"><path d="M6.5 0.5L12 5V14H1V5Z" fill="#313335" stroke="#7a7c7e" stroke-width="1"/><path d="M4 9.5H9" stroke="#7a7c7e"/></svg>
<svg style="left:287px;top:776.75px;" width="13" height="15" viewBox="0 0 13 15"><path d="M6.5 0.5L12 5V14H1V5Z" fill="#313335" stroke="#7a7c7e" stroke-width="1"/><path d="M4 9.5H9" stroke="#7a7c7e"/></svg>
<svg style="left:287px;top:171.75px;" width="13" height="15" viewBox="0 0 13 15"><path d="M1 0.5H12V9.5L6.5 14L1 9.5Z" fill="#313335" stroke="#7a7c7e" stroke-width="1"/><path d="M4 5.5H9" stroke="#7a7c7e"/></svg>
<svg style="left:287px;top:199.25px;" width="13" height="15" viewBox="0 0 13 15"><path d="M1 0.5H12V9.5L6.5 14L1 9.5Z" fill="#313335" stroke="#7a7c7e" stroke-width="1"/><path d="M4 5.5H9" stroke="#7a7c7e"/></svg>
<svg style="left:287px;top:336.75px;" width="13" height="15" viewBox="0 0 13 15"><path d="M1 0.5H12V9.5L6.5 14L1 9.5Z" fill="#313335" stroke="#7a7c7e" stroke-width="1"/><path d="M4 5.5H9" stroke="#7a7c7e"/></svg>
<svg style="left:287px;top:364.25px;" width="13" height="15" viewBox="0 0 13 15"><path d="M1 0.5H12V9.5L6.5 14L1 9.5Z" fill="#313335" stroke="#7a7c7e" stroke-width="1"/><path d="M4 5.5H9" stroke="#7a7c7e"/></svg>
<svg style="left:287px;top:419.25px;" width="13" height="15" viewBox="0 0 13 15"><path d="M1 0.5H12V9.5L6.5 14L1 9.5Z" fill="#313335" stroke="#7a7c7e" stroke-width="1"/><path d="M4 5.5H9" stroke="#7a7c7e"/></svg>
<svg style="left:287px;top:474.25px;" width="13" height="15" viewBox="0 0 13 15"><path d="M1 0.5H12V9.5L6.5 14L1 9.5Z" fill="#313335" stroke="#7a7c7e" stroke-width="1"/><path d="M4 5.5H9" stroke="#7a7c7e"/></svg>
<div class="a" style="left:451px;top:219.5px;width:50px;height:27.5px;background:#52503a"></div>
<div class="mono" style="left:421px;top:111.5px"><span class="t">&lt;li&gt;&lt;a </span><span class="n">href</span><span class="v">=&quot;#&quot;</span><span class="t">&gt;</span><span class="cj x" style="display:inline-block;width:32px;overflow:hidden;vertical-align:top">文章</span><span class="t">&lt;/a&gt;&lt;/li&gt;</span></div>
<div class="ln" style="left:206px;top:112.0px">29</div>
<div class="mono" style="left:401px;top:139.0px"><span class="t">&lt;/ul&gt;</span></div>
<div class="ln" style="left:206px;top:139.5px">30</div>
<div class="mono" style="left:401px;top:166.5px"><span class="t">&lt;form </span><span class="n">class</span><span class="v">=&quot;navbar-form navbar-left&quot;</span><span class="t">&gt;</span></div>
<div class="ln" style="left:206px;top:167.0px">31</div>
<div class="mono" style="left:421px;top:194.0px"><span class="t">&lt;div </span><span class="n">class</span><span class="v">=&quot;form-group&quot;</span><span class="t">&gt;</span></div>
<div class="ln" style="left:206px;top:194.5px">32</div>
<div class="mono" style="left:441px;top:221.5px"><span class="t">&lt;</span><span class="hl">input</span><span class="t"> </span><span class="n">type</span><span class="v">=&quot;text&quot; </span><span class="n">class</span><span class="v">=&quot;form-control&quot; </span><span class="n">placeholder</span><span class="v">=&quot;</span><span class="cj v" style="display:inline-block;width:32px;overflow:hidden;vertical-align:top">搜索</span><span class="v">&quot;</span><span class="t">&gt;</span></div>
<div class="ln" style="left:206px;top:222.0px">33</div>
<div class="mono" style="left:421px;top:249.0px"><span class="t">&lt;/div&gt;</span></div>
<div class="ln" style="left:206px;top:249.5px">34</div>
<div class="mono" style="left:421px;top:276.5px"><span class="t">&lt;button </span><span class="n">type</span><span class="v">=&quot;submit&quot; </span><span class="n">class</span><span class="v">=&quot;btn btn-default&quot;</span><span class="t">&gt;</span><span class="cj x" style="display:inline-block;width:32px;overflow:hidden;vertical-align:top">搜索</span><span class="t">&lt;/button&gt;</span></div>
<div class="ln" style="left:206px;top:277.0px">35</div>
<div class="mono" style="left:401px;top:304.0px"><span class="t">&lt;/form&gt;</span></div>
<div class="ln" style="left:206px;top:304.5px">36</div>
<div class="mono" style="left:401px;top:331.5px"><span class="t">&lt;ul </span><span class="n">class</span><span class="v">=&quot;nav navbar-nav navbar-right&quot;</span><span class="t">&gt;</span></div>
<div class="ln" style="left:206px;top:332.0px">37</div>
<div class="mono" style="left:421px;top:359.0px"><span class="x">{% </span><span class="t">if </span><span class="x">request.user.is_authenticated %}  </span><span class="c">&lt;!--is_authenticated</span><span class="cj c" style="display:inline-block;width:320px;overflow:hidden;vertical-align:top">判断当前用户是登录用户还是匿名用户，返回</span><span class="c">T or F--&gt;</span></div>
<div class="ln" style="left:206px;top:359.5px">38</div>
<div class="mono" style="left:461px;top:386.5px"><span class="t">&lt;li&gt;&lt;a </span><span class="n">href</span><span class="v">=&quot;#&quot;</span><span class="t">&gt;</span><span class="x">{{ request.user.username }}</span><span class="t">&lt;/a&gt;&lt;/li&gt;</span></div>
<div class="ln" style="left:206px;top:387.0px">39</div>
<div class="mono" style="left:461px;top:414.0px"><span class="t">&lt;li </span><span class="n">class</span><span class="v">=&quot;dropdown&quot;</span><span class="t">&gt;</span></div>
<div class="ln" style="left:206px;top:414.5px">40</div>
<div class="mono" style="left:481px;top:441.5px"><span class="t">&lt;a </span><span class="n">href</span><span class="v">=&quot;#&quot; </span><span class="n">class</span><span class="v">=&quot;dropdown-toggle&quot; </span><span class="n">data-toggle</span><span class="v">=&quot;dropdown&quot; </span><span class="n">role</span><span class="v">=&quot;button&quot; </span><span class="n">aria-haspopup</span><span class="v">=&quot;true&quot; </span><span class="n">aria-expanded</span><span class="v">=&quot;false&quot;</span><span class="t">&gt;</span><span class="cj x" style="display:inline-block;width:64px;overflow:hidden;vertical-align:top">用户设置</span><span class="t">&lt;span </span><span class="n">class</span><span class="v">=&quot;caret&quot;</span></div>
<div class="ln" style="left:206px;top:442.0px">41</div>
<div class="mono" style="left:481px;top:469.0px"><span class="t">&lt;ul </span><span class="n">class</span><span class="v">=&quot;dropdown-menu&quot;</span><span class="t">&gt;</span></div>
<div class="ln" style="left:206px;top:469.5px">42</div>
<div class="mono" style="left:501px;top:496.5px"><span class="t">&lt;li&gt;&lt;a </span><span class="n">href</span><span class="v">=&quot;#&quot;</span><span class="t">&gt;</span><span class="cj x" style="display:inline-block;width:64px;overflow:hidden;vertical-align:top">修改密码</span><span class="t">&lt;/a&gt;&lt;/li&gt;</span></div>
<div class="ln" style="left:206px;top:497.0px">43</div>
<div class="mono" style="left:501px;top:524.0px"><span class="t">&lt;li&gt;&lt;a </span><span class="n">href</span><span class="v">=&quot;#&quot;</span><span class="t">&gt;</span><span class="cj x" style="display:inline-block;width:64px;overflow:hidden;vertical-align:top">修改头像</span><span class="t">&lt;/a&gt;&lt;/li&gt;</span></div>
<div class="ln" style="left:206px;top:524.5px">44</div>
<div class="mono" style="left:501px;top:551.5px"><span class="t">&lt;li&gt;&lt;a </span><span class="n">href</span><span class="v">=&quot;#&quot;</span><span class="t">&gt;</span><span class="cj x" style="display:inline-block;width:64px;overflow:hidden;vertical-align:top">后台管理</span><span class="t">&lt;/a&gt;&lt;/li&gt;</span></div>
<div class="ln" style="left:206px;top:552.0px">45</div>
<div class="mono" style="left:501px;top:579.0px"><span class="t">&lt;li </span><span class="n">role</span><span class="v">=&quot;separator&quot; </span><span class="n">class</span><span class="v">=&quot;divider&quot;</span><span class="t">&gt;&lt;/li&gt;</span></div>
<div class="ln" style="left:206px;top:579.5px">46</div>
<div class="mono" style="left:501px;top:606.5px"><span class="t">&lt;li&gt;&lt;a </span><span class="n">href</span><span class="v">=&quot;#&quot;</span><span class="t">&gt;</span><span class="cj x" style="display:inline-block;width:64px;overflow:hidden;vertical-align:top">退出登录</span><span class="t">&lt;/a&gt;&lt;/li&gt;</span></div>
<div class="ln" style="left:206px;top:607.0px">47</div>
<div class="mono" style="left:481px;top:634.0px"><span class="t">&lt;/ul&gt;</span></div>
<div class="ln" style="left:206px;top:634.5px">48</div>
<div class="mono" style="left:461px;top:661.5px"><span class="t">&lt;/li&gt;</span></div>
<div class="ln" style="left:206px;top:662.0px">49</div>
<div class="mono" style="left:421px;top:689.0px"><span class="x">{% </span><span class="t">else </span><span class="x">%}</span></div>
<div class="ln" style="left:206px;top:689.5px">50</div>
<div class="mono" style="left:461px;top:716.5px"><span class="t">&lt;li&gt;&lt;a </span><span class="n">href</span><span class="v">=&quot;</span><span class="x">{% </span><span class="t">url </span><span class="s">&#x27;login_view&#x27; </span><span class="x">%}</span><span class="v">&quot;</span><span class="t">&gt;</span><span class="cj x" style="display:inline-block;width:32px;overflow:hidden;vertical-align:top">登录</span><span class="t">&lt;/a&gt;&lt;/li&gt;</span></div>
<div class="ln" style="left:206px;top:717.0px">51</div>
<div class="mono" style="left:461px;top:744.0px"><span class="t">&lt;li&gt;&lt;a </span><span class="n">href</span><span class="v">=&quot;</span><span class="x">{% </span><span class="t">url </span><span class="s">&#x27;register_view&#x27; </span><span class="x">%}</span><span class="v">&quot;</span><span class="t">&gt;</span><span class="cj x" style="display:inline-block;width:32px;overflow:hidden;vertical-align:top">注册</span><span class="t">&lt;/a&gt;&lt;/li&gt;</span></div>
<div class="ln" style="left:206px;top:744.5px">52</div>
<div class="mono" style="left:421px;top:771.5px"><span class="x">{% </span><span class="t">endif </span><span class="x">%}</span></div>
<div class="ln" style="left:206px;top:772.0px">53</div>
<div class="mono" style="left:301px;top:799.0px"></div>
<div class="ln" style="left:206px;top:799.5px">54</div>
<div class="mono" style="left:301px;top:826.5px"></div>
<div class="ln" style="left:206px;top:827.0px">55</div>
<div class="a" style="left:206px;top:851px;width:60px;height:16px;overflow:hidden"><div class="ln" style="left:0;top:3.5px">56</div></div>
<svg style="left:1806px;top:116px;" width="15" height="14" viewBox="0 0 15 14"><path d="M7.5 0L15 14H0Z" fill="#e8a33e"/><path d="M7.5 4.5V9.5" stroke="#2b2b2b" stroke-width="1.8"/><circle cx="7.5" cy="11.6" r="1" fill="#2b2b2b"/></svg>
<div class="tx" style="left:1824.0px;top:117.3px;font-size:15.00px;color:#bbbbbb;">2</div>
<svg style="left:1847px;top:119px;" width="12" height="8" viewBox="0 0 12 8"><path d="M1 7L6 2L11 7" fill="none" stroke="#afb1b3" stroke-width="1.6"/></svg>
<svg style="left:1873px;top:120px;" width="12" height="8" viewBox="0 0 12 8"><path d="M1 1L6 6L11 1" fill="none" stroke="#afb1b3" stroke-width="1.6"/></svg>
<div class="a" style="left:1876px;top:193px;width:17px;height:2px;background:#c69a2a"></div>
<div class="a" style="left:1876px;top:483px;width:17px;height:2px;background:#c69a2a"></div>
<div class="a" style="left:1882px;top:440px;width:10px;height:100px;background:rgba(110,112,114,.55)"></div>
<div class="a" style="left:301px;top:856px;width:1593px;height:10px;background:#4a4c4e"></div>
<div class="a" style="left:221px;top:867px;width:1674px;height:30px;background:#313335"></div>
<div class="a" style="left:221px;top:867px;width:1674px;height:1px;background:#323232"></div>
<div class="tx" style="left:306.0px;top:876.5px;font-size:16.00px;color:#bbbbbb;transform-origin:0 0;transform:scaleX(1.0586);">html</div>
<div class="tx" style="left:352.0px;top:877.1px;font-size:14.00px;color:#707070;">›</div>
<div class="tx" style="left:369.0px;top:876.5px;font-size:16.00px;color:#bbbbbb;transform-origin:0 0;transform:scaleX(1.0664);">body</div>
<div class="tx" style="left:418.0px;top:877.1px;font-size:14.00px;color:#707070;">›</div>
<div class="tx" style="left:436.0px;top:876.5px;font-size:16.00px;color:#bbbbbb;transform-origin:0 0;transform:scaleX(1.0033);">nav.navbar.navbar-inverse</div>
<div class="a" style="left:1895px;top:72px;width:25px;height:980px;background:#3c3f41"></div>
<div class="a" style="left:1894px;top:72px;width:1px;height:980px;background:#323232"></div>
<svg style="left:1901px;top:84px;" width="14" height="16" viewBox="0 0 14 16"><ellipse cx="7" cy="2.5" rx="6.5" ry="2.5" fill="#afb1b3"/><path d="M0.5 4.5C0.5 7.5 13.5 7.5 13.5 4.5V7C13.5 10 0.5 10 0.5 7Z M0.5 9.5C0.5 12.5 13.5 12.5 13.5 9.5V12.5C13.5 15.5 0.5 15.5 0.5 12.5Z" fill="#afb1b3"/></svg>
<div class="tx" style="left:0.0px;top:-11.9px;font-size:14.00px;color:#bbbbbb;transform-origin:0 0;transform:translate(1899px,106px) rotate(90deg) scaleX(0.9511) translate(0,-13px);left:0;top:0">Database</div>
<svg style="left:1900px;top:192px;" width="14" height="13" viewBox="0 0 14 13"><rect x="0" y="0" width="14" height="13" fill="#afb1b3"/><path d="M0 4.5H14M0 8.5H14M3.5 0V13M7 0V13M10.5 0V13" stroke="#3c3f41" stroke-width="1"/></svg>
<div class="tx" style="left:0.0px;top:-11.9px;font-size:14.00px;color:#bbbbbb;transform-origin:0 0;transform:translate(1899px,211px) rotate(90deg) scaleX(0.9689) translate(0,-13px);left:0;top:0">SciView</div>
<div class="a" style="left:27px;top:897px;width:1868px;height:1px;background:#323232"></div>
<div class="a" style="left:28px;top:898px;width:1867px;height:33px;background:#3c3f41"></div>
<div class="tx" style="left:35.6px;top:908.1px;font-size:15.00px;color:#bbbbbb;transform-origin:0 0;transform:scaleX(0.9784);">Run:</div>
<svg style="left:93px;top:907px;" width="18" height="18" viewBox="0 0 18 18"><rect x="0" y="0" width="15" height="15" rx="2" fill="#b9bdbf"/><text x="2.5" y="11" font-size="10" font-weight="bold" font-family="Liberation Sans" fill="#0c3c26">dj</text><circle cx="15.5" cy="15.5" r="2.6" fill="#3bd13b" stroke="#3c3f41" stroke-width="0.8"/></svg>
<div class="tx" style="left:116.0px;top:908.1px;font-size:15.00px;color:#bbbbbb;transform-origin:0 0;transform:scaleX(0.9315);">BBS01</div>
<svg style="left:170px;top:911px;" width="10" height="10" viewBox="0 0 10 10"><path d="M0.5 0.5L9.5 9.5M9.5 0.5L0.5 9.5" stroke="#6e6e6e" stroke-width="1.2"/></svg>
<div class="a" style="left:76px;top:929px;width:118px;height:3px;background:#8d8d8d"></div>
<div class="a" style="left:28px;top:931px;width:35px;height:94px;background:#3c3f41"></div>
<div class="a" style="left:63px;top:931px;width:1px;height:94px;background:#323232"></div>
<div class="a" style="left:64px;top:931px;width:35px;height:94px;background:#3c3f41"></div>
<div class="a" style="left:99px;top:931px;width:888px;height:94px;background:#2b2b2b"></div>
<svg style="left:37px;top:942px;" width="18" height="18" viewBox="0 0 18 18"><path d="M13 6A6 6 0 1 0 8 16" fill="none" stroke="#499c54" stroke-width="2.4"/><path d="M10 1L17 5L11 9Z" fill="#499c54"/><rect x="11" y="11" width="6" height="6" fill="#afb1b3"/></svg>
<svg style="left:37px;top:975px;" width="17" height="17" viewBox="0 0 17 17"><path d="M2 15L9 8" stroke="#afb1b3" stroke-width="3.2" stroke-linecap="round"/><path d="M9 8C7 4 10 0 15 1L12 4L13 5L16 2C17 7 13 10 9 8Z" fill="#afb1b3"/></svg>
<div class="tx" style="left:42.0px;top:1006.0px;font-size:13.00px;color:#afb1b3;">»</div>
<svg style="left:74px;top:943px;" width="13" height="17" viewBox="0 0 13 17"><path d="M6.5 1V17M1 6.5L6.5 1L12 6.5" fill="none" stroke="#afb1b3" stroke-width="2"/></svg>
<svg style="left:74px;top:975px;" width="13" height="17" viewBox="0 0 13 17"><path d="M6.5 0V16M1 10.5L6.5 16L12 10.5" fill="none" stroke="#afb1b3" stroke-width="2"/></svg>
<div class="tx" style="left:78.0px;top:1006.0px;font-size:13.00px;color:#afb1b3;">»</div>
<div class="a" style="left:99px;top:931px;width:888px;height:94px;overflow:hidden">
<div class="tx" style="left:16.0px;top:-10.3px;font-size:16.67px;color:#ff6b68;font-family:'Liberation Mono',monospace;">appointment.ticketing.(TicketHold) index has no effect on nan/union/field.</div>
<div class="tx" style="left:16.0px;top:44.2px;font-size:16.67px;color:#ff6b68;font-family:'Liberation Mono',monospace;">System check identified 1 issue (0 silenced).</div>
<div class="tx" style="left:16.0px;top:70.7px;font-size:16.67px;color:#bbbbbb;font-family:'Liberation Mono',monospace;">January 03, 2023 - 17:28:01</div>
</div>
<div class="a" style="left:0px;top:1025px;width:1920px;height:27px;background:#3c3f41"></div>
<div class="a" style="left:27px;top:1025px;width:67px;height:27px;background:#2d2f30"></div>
<svg style="left:39px;top:1034px;" width="14" height="14" viewBox="0 0 14 14"><path d="M0 0L12 6.5L0 13Z" fill="#afb1b3"/><circle cx="12" cy="12" r="2.7" fill="#3bd13b"/></svg>
<div class="tx" style="left:59.5px;top:1034.5px;font-size:13.30px;color:#e0e0e0;transform-origin:0 0;transform:scaleX(0.9427);">Run</div>
<svg style="left:108px;top:1034px;" width="14" height="12" viewBox="0 0 14 12"><rect x="0" y="0" width="2.5" height="2.5" fill="#afb1b3"/><rect x="0" y="4.5" width="2.5" height="2.5" fill="#afb1b3"/><rect x="0" y="9" width="2.5" height="2.5" fill="#afb1b3"/><rect x="4" y="0" width="10" height="2.5" fill="#afb1b3"/><rect x="4" y="4.5" width="10" height="2.5" fill="#afb1b3"/><rect x="4" y="9" width="10" height="2.5" fill="#afb1b3"/></svg>
<div class="tx" style="left:128.6px;top:1034.5px;font-size:13.30px;color:#bbbbbb;transform-origin:0 0;transform:scaleX(1.0005);">TODO</div>
<svg style="left:192px;top:1033px;" width="15" height="15" viewBox="0 0 15 15"><circle cx="7.5" cy="7.5" r="7" fill="#afb1b3"/><path d="M7.5 3V9" stroke="#3c3f41" stroke-width="2"/><circle cx="7.5" cy="11.5" r="1.1" fill="#3c3f41"/></svg>
<div class="tx" style="left:213.7px;top:1034.5px;font-size:13.30px;color:#bbbbbb;transform-origin:0 0;transform:scaleX(1.0022);">Problems</div>
<svg style="left:297px;top:1034px;" width="14" height="13" viewBox="0 0 14 13"><rect x="0" y="0" width="14" height="13" fill="#afb1b3"/><path d="M2.5 3L6 6L2.5 9" stroke="#3c3f41" stroke-width="1.4" fill="none"/><path d="M7 10H11.5" stroke="#3c3f41" stroke-width="1.3"/></svg>
<div class="tx" style="left:317.0px;top:1034.5px;font-size:13.30px;color:#bbbbbb;transform-origin:0 0;transform:scaleX(1.0545);">Terminal</div>
<svg style="left:398px;top:1032px;" width="16" height="16" viewBox="0 0 16 16"><path d="M8 0L16 4L8 8L0 4Z" fill="#afb1b3"/><path d="M0 7L8 11L16 7M0 10.5L8 14.5L16 10.5" stroke="#afb1b3" stroke-width="1.6" fill="none"/></svg>
<div class="tx" style="left:419.0px;top:1034.5px;font-size:13.30px;color:#bbbbbb;transform-origin:0 0;transform:scaleX(1.0144);">Python Packages</div>
<svg style="left:556px;top:1033px;" width="15" height="15" viewBox="0 0 15 15"><path d="M7.5 0C4 0 4 1.5 4 3V5H8V6H2C0.5 6 0 7.5 0 9C0 10.5 0.7 12 2 12H4V10C4 8.8 4.8 8 6 8H10C11 8 11.5 7.5 11.5 6.5V3C11.5 1.5 10.5 0 7.5 0Z" fill="#afb1b3"/><path d="M7.5 15C11 15 11 13.5 11 12V10H7V9H13C14.5 9 15 7.5 15 6C15 4.5 14.3 3 13 3H11V5C11 6.2 10.2 7 9 7H5C4 7 3.5 7.5 3.5 8.5V12C3.5 13.5 4.5 15 7.5 15Z" fill="#afb1b3" opacity=".8"/></svg>
<div class="tx" style="left:576.0px;top:1034.5px;font-size:13.30px;color:#bbbbbb;transform-origin:0 0;transform:scaleX(1.0330);">Python Console</div>
<div class="a" style="left:0px;top:1053px;width:1920px;height:1px;background:#4a4c4e"></div>
<div class="a" style="left:0px;top:1054px;width:1920px;height:25px;background:#3c3f41"></div>
<div class="a" style="left:0px;top:1078px;width:987px;height:1px;background:#2e2f30"></div>
<svg style="left:8px;top:1058px;" width="15" height="15" viewBox="0 0 15 15"><rect x="3.5" y="0.5" width="11" height="11" fill="none" stroke="#afb1b3"/><path d="M0.5 3.5V14.5H11.5" fill="none" stroke="#afb1b3"/></svg>
<div class="tx" style="left:34.0px;top:1058.3px;font-size:15.00px;color:#bbbbbb;transform-origin:0 0;transform:scaleX(1.1047);">Data sources detected: Connection properties are detected. // Configure (today 15:23)</div>
<div class="a" style="left:987px;top:518px;width:933px;height:561px;background:#ffffff"></div>
<div class="a" style="left:987px;top:518px;width:933px;height:54px;background:#674111"></div>
<div class="a" style="left:986px;top:517px;width:934px;height:1px;background:#242424"></div>
<div class="a" style="left:986px;top:517px;width:1px;height:562px;background:#242424"></div>
<div class="a" style="left:987px;top:518px;width:933px;height:1px;background:#7a5324"></div>
<div class="a" style="left:987px;top:518px;width:1px;height:561px;background:#7a5324"></div>
<svg style="left:988px;top:529px;" width="326" height="43" viewBox="0 0 326 43"><path d="M0 43C6 43 10 39 10 33V9C10 4 14 0 19 0H301C306 0 310 4 310 9V33C310 39 314 43 320 43Z" fill="#ffffff"/></svg>
<svg style="left:1014px;top:542px;" width="19" height="19" viewBox="0 0 19 19"><circle cx="9.5" cy="9.5" r="8.6" fill="none" stroke="#5f6368" stroke-width="1.8"/><path d="M10.7 1.5L10.5 4.2C9 4.6 8 5.3 8.1 6.3C8.1 7.3 9 7.9 10.9 8.1C11.5 9 12.3 9.9 13.8 10C15 10 15.8 9.3 16.6 9L17.8 8.5C17.5 4.5 14.5 1.8 10.7 1.5Z" fill="#5f6368"/><path d="M1.5 9.5L8.1 9.6C9.3 10 10.2 11 10.2 12.2C10.2 13 9.2 13.4 7.8 13.6C7.2 14.5 7 15.3 7.4 16.2L8.2 17.9C4.5 17.3 1.6 14 1.5 9.5Z" fill="#5f6368"/></svg>
<div class="tx" style="left:1043.0px;top:544.3px;font-size:15.00px;color:#3c4043;"><span style="font-size:15px">网站首页</span></div>
<svg style="left:1272px;top:545px;" width="12" height="12" viewBox="0 0 12 12"><path d="M1 1L11 11M11 1L1 11" stroke="#202124" stroke-width="2"/></svg>
<svg style="left:1317px;top:542px;" width="16" height="16" viewBox="0 0 16 16"><path d="M8 1V15M1 8H15" stroke="#f1e8da" stroke-width="2.2"/></svg>
<svg style="left:1745px;top:533px;" width="15" height="9" viewBox="0 0 15 9"><path d="M1 1L7.5 7.5L14 1" fill="none" stroke="#e8dccb" stroke-width="1.2"/></svg>
<div class="a" style="left:1803px;top:537px;width:14px;height:1px;background:#f0e6d8"></div>
<div class="a" style="left:1860px;top:531px;width:13px;height:13px;border:1px solid #f5ede2"></div>
<div class="a" style="left:1917px;top:531px;width:3px;height:3px;background:#f0e6d8"></div>
<div class="a" style="left:1917px;top:541px;width:3px;height:3px;background:#f0e6d8"></div>
<div class="a" style="left:988px;top:572px;width:932px;height:45px;background:#ffffff"></div>
<svg style="left:1007px;top:586px;" width="17" height="16" viewBox="0 0 17 16"><path d="M16 8H2M8.5 1.5L2 8L8.5 14.5" fill="none" stroke="#5f6368" stroke-width="2"/></svg>
<svg style="left:1047px;top:586px;" width="17" height="16" viewBox="0 0 17 16"><path d="M1 8H15M8.5 1.5L15 8L8.5 14.5" fill="none" stroke="#b0b3b8" stroke-width="2"/></svg>
<svg style="left:1087px;top:585px;" width="18" height="18" viewBox="0 0 18 18"><path d="M15 9A6.2 6.2 0 1 1 13 4.3" fill="none" stroke="#5f6368" stroke-width="2"/><path d="M10.5 1H16.5V7Z" fill="#5f6368"/></svg>
<div class="a" style="left:1123px;top:577px;width:655px;height:35px;background:#f1f3f4;border-radius:17.5px"></div>
<svg style="left:1137px;top:586px;" width="17" height="17" viewBox="0 0 17 17"><circle cx="8.3" cy="8.3" r="7.3" fill="none" stroke="#5f6368" stroke-width="1.8"/><rect x="7.3" y="7" width="2" height="5.5" fill="#5f6368"/><circle cx="8.3" cy="4.7" r="1.15" fill="#5f6368"/></svg>
<div class="tx" style="left:1166.9px;top:584.0px;font-size:19.80px;color:#202124;transform-origin:0 0;transform:scaleX(0.9400);">127.0.0.1<span style="color:#5f6368">:8000/home/</span></div>
<svg style="left:1666px;top:588px;" width="19" height="11" viewBox="0 0 19 11"><circle cx="5" cy="5" r="4.2" fill="none" stroke="#5f6368" stroke-width="2.4"/><path d="M8.5 4H18.5M15 4V9.5M17.5 4V8" stroke="#5f6368" stroke-width="2.2"/></svg>
<svg style="left:1706px;top:586px;" width="20" height="17" viewBox="0 0 20 17"><path d="M1 7V16H14" fill="none" stroke="#5f6368" stroke-width="1.6"/><path d="M4 14C5 9 9 6.5 14 6.5V10L19 5L14 0.5V3.5C8 4 4.5 8 4 14Z" fill="none" stroke="#5f6368" stroke-width="1.5" stroke-linejoin="round"/></svg>
<svg style="left:1746px;top:586px;" width="19" height="17" viewBox="0 0 19 17"><path d="M9.5 1.2L11.9 6.4L17.6 7L13.3 10.8L14.6 16.3L9.5 13.4L4.4 16.3L5.7 10.8L1.4 7L7.1 6.4Z" fill="none" stroke="#5f6368" stroke-width="1.8" stroke-linejoin="round"/></svg>
<svg style="left:1797px;top:585px;" width="19" height="19" viewBox="0 0 19 19"><path d="M7 1.5C8.8 1.5 9 3 9 4.5H13.5V9C15 9 17 9.3 17 11C17 12.8 15 13 13.5 13V17.5H9.5C9.5 16 9.2 14.5 7.5 14.5C5.8 14.5 5.5 16 5.5 17.5H1V13C2.5 13 4 12.8 4 11C4 9.3 2.5 9 1 9V4.5H5C5 3 5.2 1.5 7 1.5Z" fill="#5f6368"/></svg>
<svg style="left:1837px;top:585px;" width="18" height="19" viewBox="0 0 18 19"><rect x="1" y="1" width="16" height="17" fill="none" stroke="#5f6368" stroke-width="2"/><rect x="10" y="1" width="7" height="17" fill="#5f6368"/></svg>
<svg style="left:1872px;top:581px;" width="28" height="28" viewBox="0 0 28 28"><circle cx="14" cy="14" r="14" fill="#e3e5e8"/><circle cx="14" cy="9.3" r="4.3" fill="#5b6573"/><path d="M6 20.5C6 16.5 10 14.8 14 14.8C18 14.8 22 16.5 22 20.5V22H6Z" fill="#5b6573"/></svg>
<div class="a" style="left:988px;top:617px;width:940px;height:66px;background:#222222;border:1px solid #080808;border-radius:5px 0 0 5px"></div>
<div class="tx" style="left:1008.4px;top:638.6px;font-size:22.50px;color:#9d9d9d;transform-origin:0 0;transform:scaleX(0.9795);">BBS</div>
<div class="a" style="left:1072px;top:618px;width:72px;height:64px;background:#080808"></div>
<div class="tx" style="left:1091.0px;top:643.2px;font-size:17.50px;color:#ffffff;"><span style="font-size:17.5px">博客</span></div>
<div class="tx" style="left:1163.0px;top:643.2px;font-size:17.50px;color:#9d9d9d;"><span style="font-size:17.5px">文章</span></div>
<div class="a" style="left:1236px;top:629px;width:250px;height:43px;background:#fff;border:1px solid #ccc;border-radius:5px;box-shadow:inset 0 1px 1px rgba(0,0,0,.075)"></div>
<div class="tx" style="left:1252.0px;top:643.2px;font-size:17.50px;color:#999999;"><span style="font-size:17.5px">搜索</span></div>
<div class="a" style="left:1491px;top:629px;width:67px;height:43px;background:#fff;border:1px solid #ccc;border-radius:5px"></div>
<div class="tx" style="left:1508.0px;top:643.2px;font-size:17.50px;color:#333333;"><span style="font-size:17.5px">搜索</span></div>
<div class="tx" style="left:1751.7px;top:641.4px;font-size:17.60px;color:#9d9d9d;transform-origin:0 0;transform:scaleX(1.0053);">jason</div>
<div class="a" style="left:1813px;top:618px;width:107px;height:64px;background:#080808"></div>
<div class="tx" style="left:1832.0px;top:643.2px;font-size:17.50px;color:#ffffff;"><span style="font-size:17.5px">用户设置</span></div>
<svg style="left:1904px;top:648px;" width="10" height="6" viewBox="0 0 10 6"><path d="M0 0H10L5 5.5Z" fill="#ffffff"/></svg>
<div class="a" style="left:1734px;top:683px;width:200px;height:167px;background:#fff;border:1px solid rgba(0,0,0,.15);border-radius:0 0 5px 5px;box-shadow:0 7px 15px rgba(0,0,0,.175)"></div>
<div class="tx" style="left:1759.0px;top:697.2px;font-size:17.50px;color:#333333;"><span style="font-size:17.5px">修改密码</span></div>
<div class="tx" style="left:1759.0px;top:729.7px;font-size:17.50px;color:#333333;"><span style="font-size:17.5px">修改头像</span></div>
<div class="tx" style="left:1759.0px;top:762.2px;font-size:17.50px;color:#333333;"><span style="font-size:17.5px">后台管理</span></div>
<div class="tx" style="left:1759.0px;top:817.2px;font-size:17.50px;color:#333333;"><span style="font-size:17.5px">退出登录</span></div>
<div class="a" style="left:1735px;top:798px;width:185px;height:1px;background:#e5e5e5"></div>
<div class="a" style="left:988px;top:1078px;width:932px;height:1px;background:#dddddd"></div>
<div class="a" style="left:967px;top:518px;width:20px;height:561px;background:linear-gradient(to right,rgba(0,0,0,0),rgba(0,0,0,.10))"></div>
<div class="a" style="left:315px;top:359px;width:1606px;height:538px;border:2px solid #f81a24"></div>
</body></html>
